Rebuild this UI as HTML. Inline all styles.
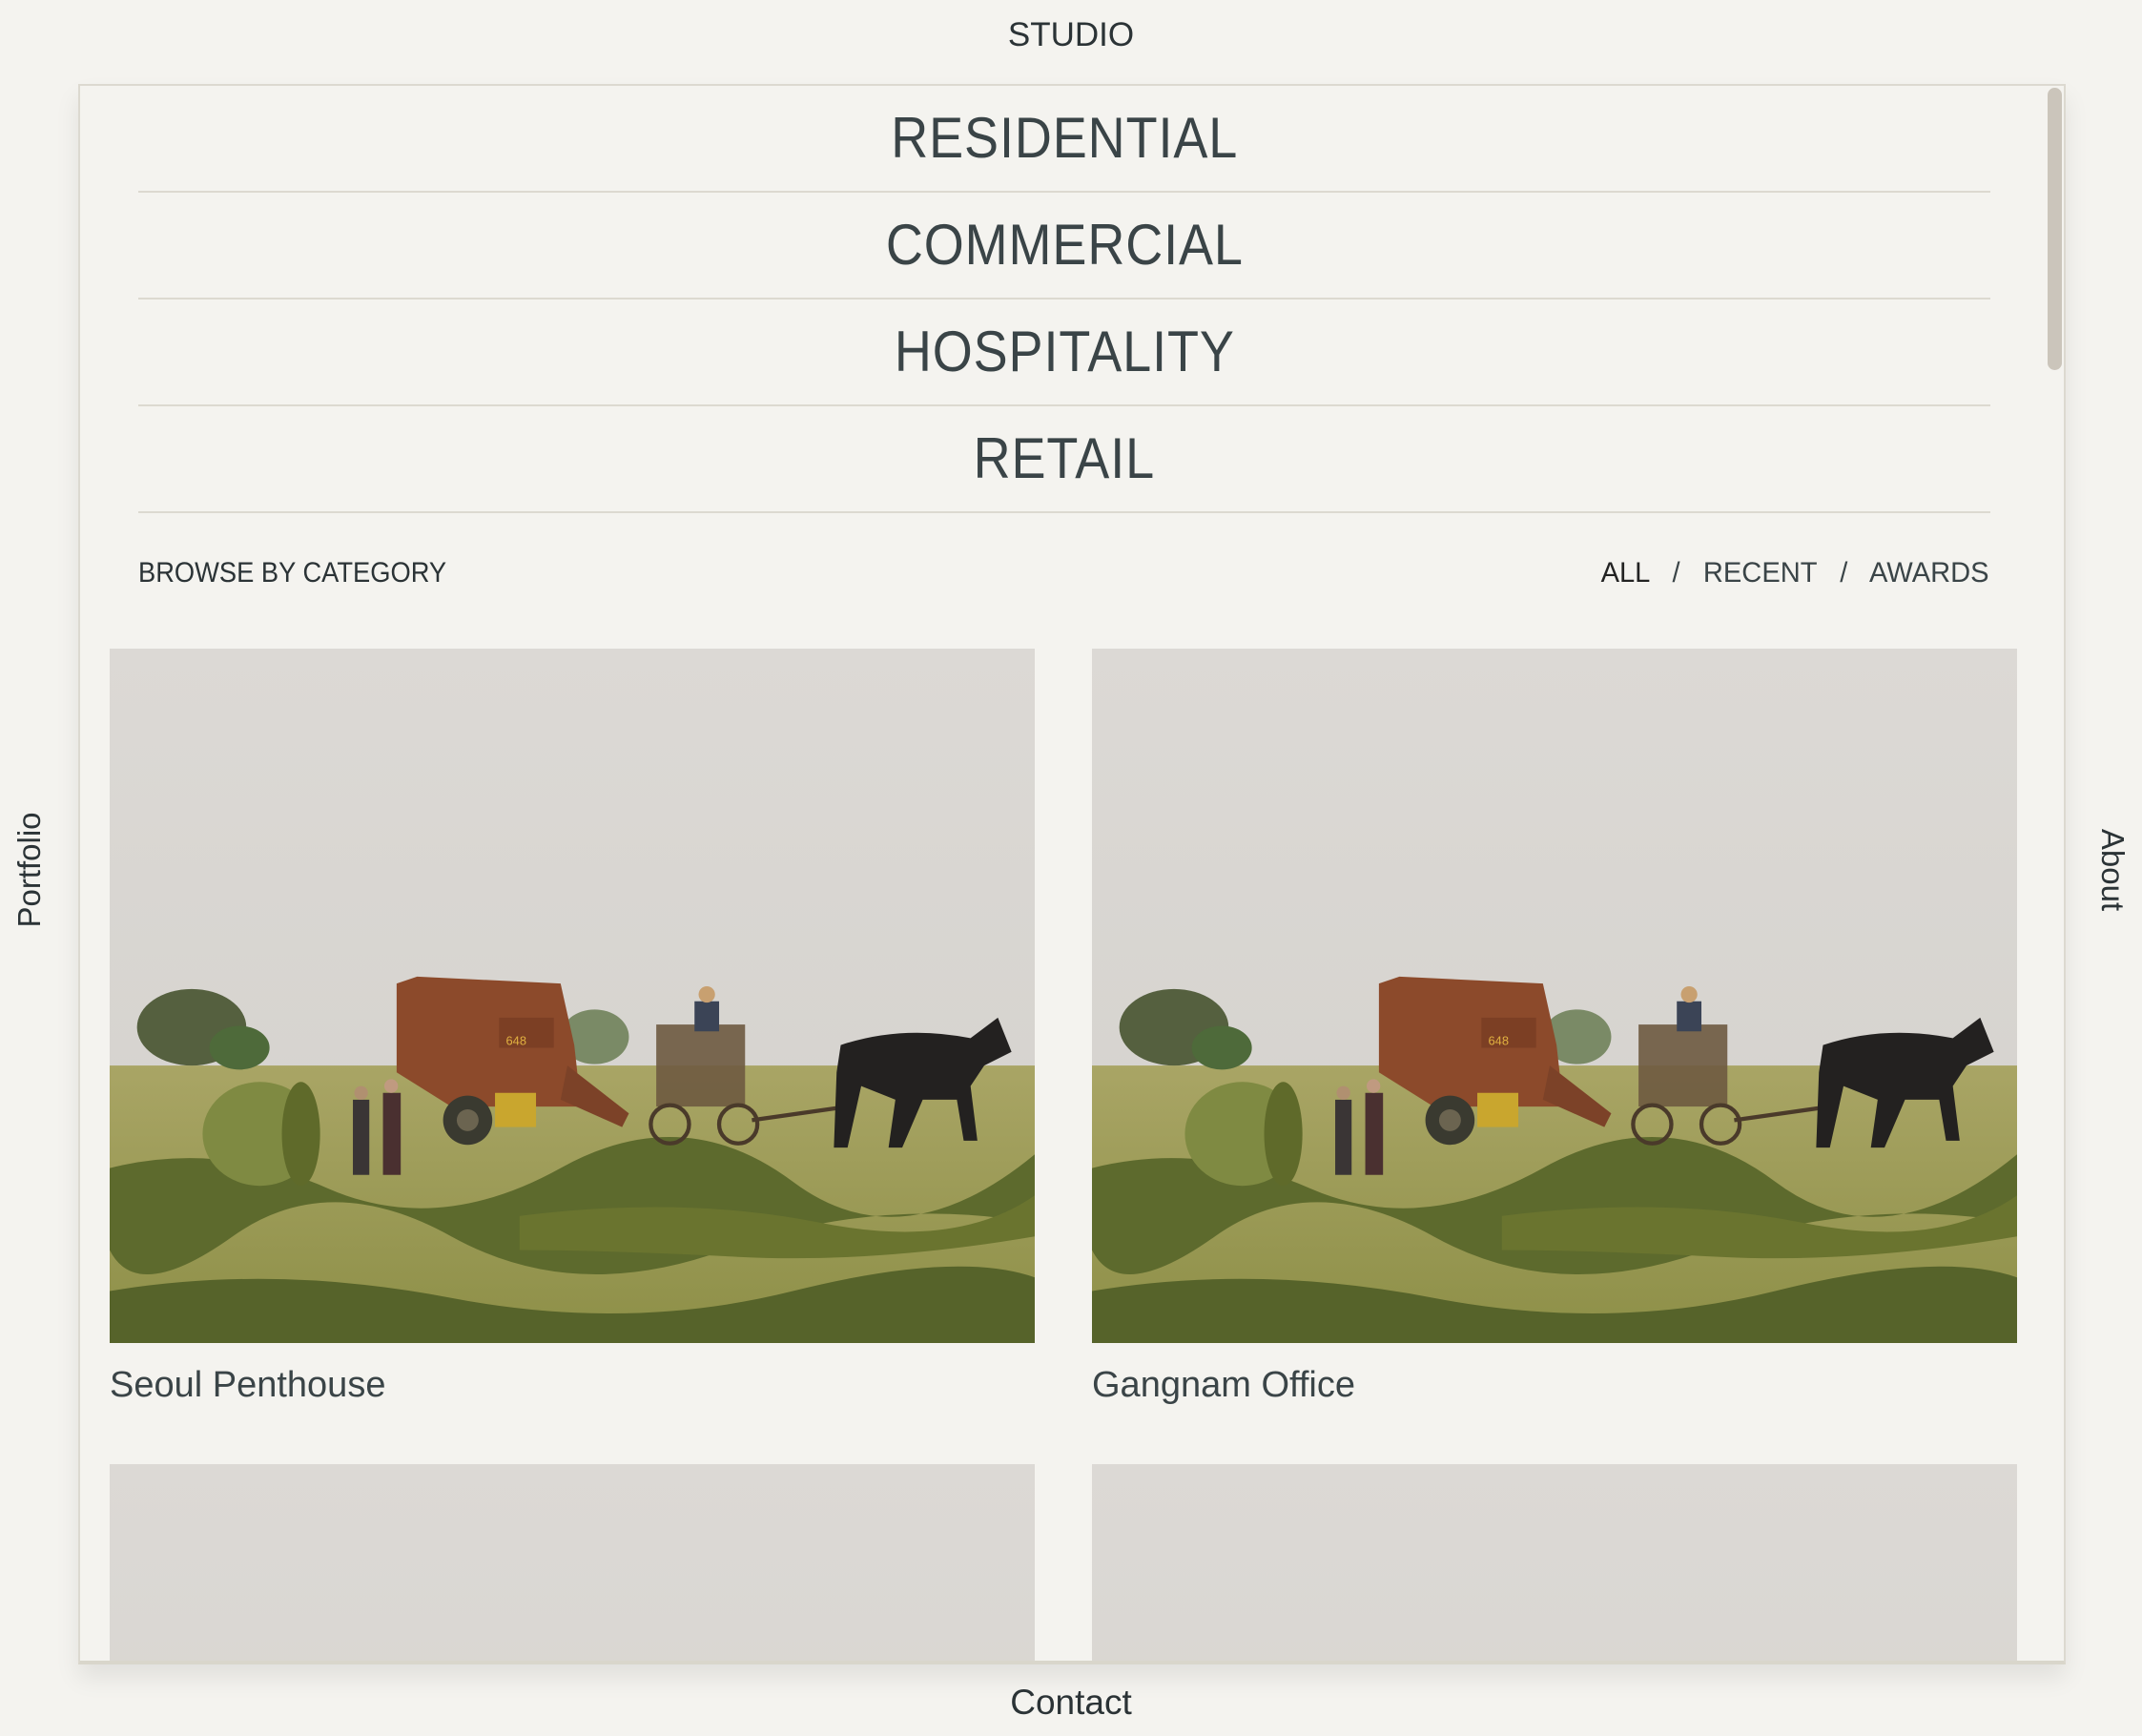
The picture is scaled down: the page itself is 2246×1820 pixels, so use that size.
<!DOCTYPE html>
<html><head><meta charset="utf-8"><style>
html,body{margin:0;padding:0;width:2246px;height:1820px;overflow:hidden}
body{background:#f4f3ef;position:relative;font-family:"Liberation Sans","NanumGothic",sans-serif;color:#3a4447}
.abs{position:absolute}
.studio{left:0;width:2246px;top:17px;text-align:center;font-size:35px;color:#2b3336}
.contact{left:0;width:2246px;top:1764px;text-align:center;font-size:37px;color:#2b3336}
.panel{left:82px;top:88px;width:2080px;height:1651px;border:2px solid #dcd9d0;border-bottom:4px solid #d9d6cb;background:#f4f3ef;overflow:hidden;box-shadow:0 14px 24px rgba(0,0,0,0.08)}
.thumb{left:2063px;top:2px;width:15px;height:296px;background:#cbc5bb;border-radius:8px}
.cat{left:61px;width:1942px;height:110px;border-bottom:2px solid #dcd9d0;text-align:center}
.cat span{display:inline-block;font-size:60px;line-height:110px;transform:scaleX(0.9);letter-spacing:1px;color:#3a4447}
.browse{left:61px;top:494px;font-size:30px;transform-origin:left;transform:scaleX(0.91);color:#2b3336}
.filt{right:78px;top:494px;font-size:30px;color:#3a4447;white-space:pre;transform-origin:right;transform:scaleX(0.97)}
.img{width:970px;height:728px}
.cap{font-size:38px;color:#3a4447}
.vert{font-size:33px;color:#2b3336;white-space:nowrap}
</style></head><body>
<div class="abs studio">STUDIO</div>
<div class="abs vert" style="left:-44px;top:893px;transform:rotate(-90deg);width:150px;text-align:center">Portfolio</div>
<div class="abs vert" style="left:2160px;top:893px;transform:rotate(90deg);width:110px;text-align:center">About</div>
<div class="abs panel">
  <div class="abs cat" style="top:0"><span>RESIDENTIAL</span></div>
  <div class="abs cat" style="top:112px"><span>COMMERCIAL</span></div>
  <div class="abs cat" style="top:224px"><span>HOSPITALITY</span></div>
  <div class="abs cat" style="top:336px"><span>RETAIL</span></div>
  <div class="abs browse">BROWSE BY CATEGORY</div>
  <div class="abs filt"><span style="color:#222">ALL</span>   /   RECENT   /   AWARDS</div>
  <svg class="abs img" style="left:31px;top:590px" viewBox="0 0 677 508" preserveAspectRatio="none"><use href="#photo"/></svg>
  <svg class="abs img" style="left:1061px;top:590px" viewBox="0 0 677 508" preserveAspectRatio="none"><use href="#photo"/></svg>
  <div class="abs cap" style="left:31px;top:1341px">Seoul Penthouse</div>
  <div class="abs cap" style="left:1061px;top:1341px">Gangnam Office</div>
  <svg class="abs img" style="left:31px;top:1445px" viewBox="0 0 677 508" preserveAspectRatio="none"><use href="#photo"/></svg>
  <svg class="abs img" style="left:1061px;top:1445px" viewBox="0 0 677 508" preserveAspectRatio="none"><use href="#photo"/></svg>
  <div class="abs thumb"></div>
</div>
<div class="abs contact">Contact</div>
<svg width="0" height="0" style="position:absolute;left:0;top:0"><defs>
<linearGradient id="sky" x1="0" y1="0" x2="0" y2="1"><stop offset="0" stop-color="#dcd9d5"/><stop offset="1" stop-color="#d3d1cc"/></linearGradient>
<linearGradient id="fld" x1="0" y1="0" x2="0" y2="1"><stop offset="0" stop-color="#a9a565"/><stop offset="1" stop-color="#8d8f47"/></linearGradient>
<g id="photo">
<rect width="677" height="508" fill="url(#sky)"/>
<rect y="305" width="677" height="203" fill="url(#fld)"/>
<ellipse cx="60" cy="277" rx="40" ry="28" fill="#55603f"/>
<ellipse cx="95" cy="292" rx="22" ry="16" fill="#4e6a3a"/>
<ellipse cx="355" cy="284" rx="25" ry="20" fill="#7a8a66"/>
<path d="M0 380 Q80 360 160 395 T330 380 T500 390 T677 370 L677 420 Q560 400 450 440 T250 430 T90 430 T0 440Z" fill="#5d6a2d"/>
<path d="M0 470 Q120 450 250 475 T500 470 T677 460 L677 508 L0 508Z" fill="#56632a"/>
<path d="M300 415 Q420 400 520 420 T677 400 L677 430 Q560 450 460 445 T300 440Z" fill="#6a742f"/>
<path d="M210 245 L225 240 L330 245 L340 290 L345 335 L250 335 L210 310Z" fill="#8c4a2b"/>
<rect x="285" y="270" width="40" height="22" fill="#7c3f24"/>
<text x="290" y="290" font-size="9" fill="#e0b040" font-family="Liberation Sans">648</text>
<path d="M335 305 L380 340 L375 350 L330 330Z" fill="#7c4228"/>
<circle cx="262" cy="345" r="18" fill="#3a3a30"/><circle cx="262" cy="345" r="8" fill="#6b6450"/>
<rect x="282" y="325" width="30" height="25" fill="#c9a62e"/>
<rect x="400" y="275" width="65" height="60" fill="#6e5a40" opacity="0.9"/>
<rect x="428" y="258" width="18" height="22" fill="#3b4456"/><circle cx="437" cy="253" r="6" fill="#c8a070"/>
<circle cx="410" cy="348" r="14" fill="none" stroke="#4a3a2a" stroke-width="3"/>
<circle cx="460" cy="348" r="14" fill="none" stroke="#4a3a2a" stroke-width="3"/>
<path d="M470 345 L540 335" stroke="#4a3a2a" stroke-width="3"/>
<path d="M535 290 Q580 275 630 285 L650 270 L660 295 L640 305 L630 320 L635 360 L625 360 L620 330 L595 330 L580 365 L570 365 L575 330 L550 320 L540 365 L530 365 L532 310Z" fill="#232120"/>
<ellipse cx="110" cy="355" rx="42" ry="38" fill="#7f8a42"/>
<ellipse cx="140" cy="355" rx="14" ry="38" fill="#5f6a2a"/>
<rect x="178" y="330" width="12" height="55" fill="#3a3535"/><circle cx="184" cy="325" r="5" fill="#b09070"/>
<rect x="200" y="325" width="13" height="60" fill="#4a3030"/><circle cx="206" cy="320" r="5" fill="#c09a80"/>
</g></defs></svg>
</body></html>
